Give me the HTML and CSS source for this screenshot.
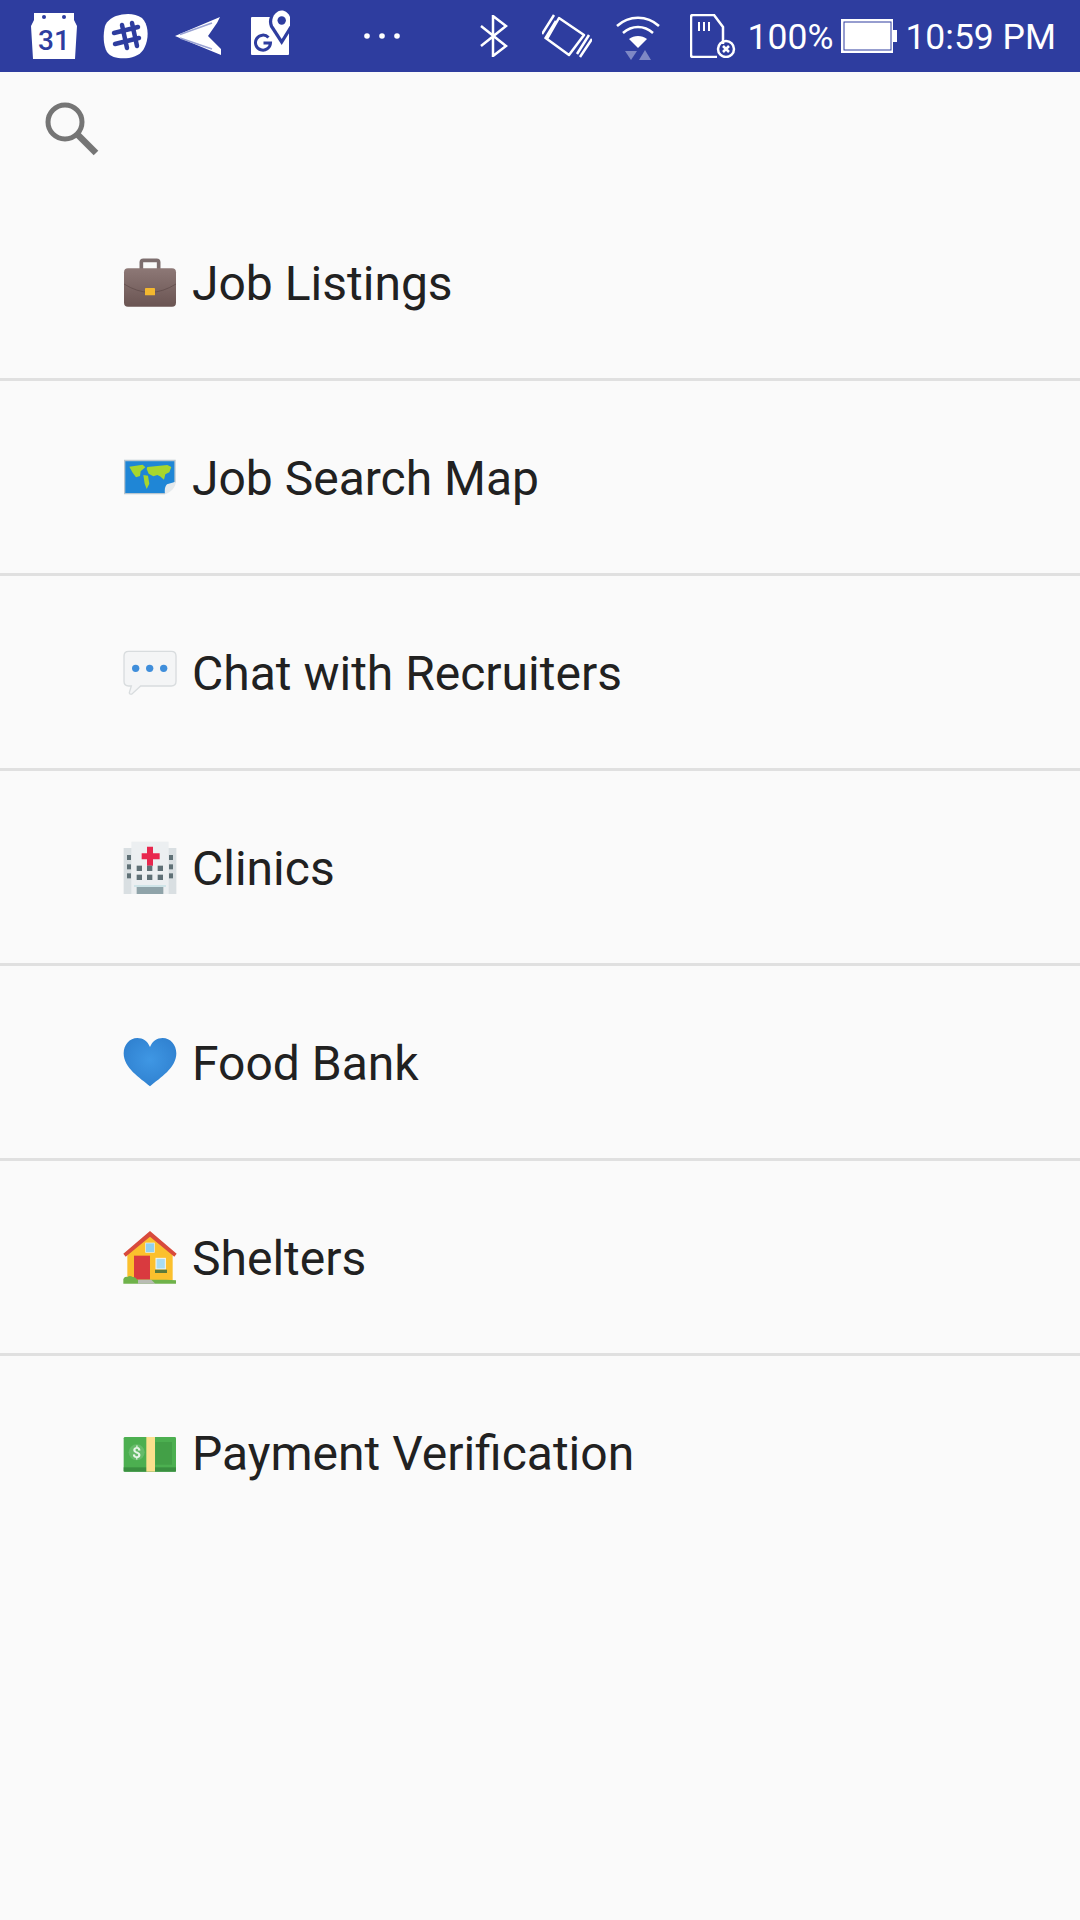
FILE: index.html
```html
<!DOCTYPE html>
<html lang="en">
<head>
<meta charset="utf-8">
<title>Job menu</title>
<link rel="stylesheet" href="styles.css">
</head>
<body>
<div class="status">
  <div class="status-group">
    <svg class="ic cal" viewBox="0 0 46 48"><path d="M3 1h40l0 7 3 6-2 33H2L0 14l3-6z" fill="#fff"/><circle cx="13" cy="5" r="2" fill="#2e3d9f"/><circle cx="33" cy="5" r="2" fill="#2e3d9f"/><text class="cal-num" x="23" y="38" text-anchor="middle">31</text></svg>
    <svg class="ic slk" viewBox="0 0 46 46"><path d="M13 3C22 0 32 0 39 5c6 6 7 17 4 26-3 9-8 12-17 14-9 1-18 0-22-6C0 32 0 21 2 13 4 8 8 5 13 3z" fill="#fff"/><path d="M19 12l5 23M29 10l5 23M11 20l24-6M12 31l24-6" stroke="#2e3d9f" stroke-width="4.500" stroke-linecap="round" fill="none"/></svg>
    <svg class="ic pln" viewBox="0 0 48 40"><path d="M1 20L46 1l-3 6-9 13 13 13v6z" fill="#fff"/><path d="M6 18.500L38 7M6 22L38 33" stroke="#9aa3d4" stroke-width="1.500"/></svg>
    <svg class="ic map" viewBox="0 0 40 46"><rect x="1" y="7" width="38" height="38" rx="1" fill="#fff"/><path d="M31.700 35L20 17C16 7 24-1 31.700-1S47 7 43 17z" fill="#2e3d9f"/><path d="M31.700 29L23 15.500C20 8 26 0.500 31.700 0.500S43 8 40 15.500z" fill="#fff"/><circle cx="31.700" cy="10.500" r="4.200" fill="#2e3d9f"/><path d="M18.500 27.500a7.500 7.500 0 1 0 2 5.500h-7" fill="none" stroke="#2e3d9f" stroke-width="3"/></svg>
    <svg class="ic dts" viewBox="0 0 36 6"><circle cx="3" cy="3" r="2.800" fill="#fff"/><circle cx="18" cy="3" r="2.800" fill="#fff"/><circle cx="33" cy="3" r="2.800" fill="#fff"/></svg>
  </div>
  <div class="status-group">
    <svg class="ic blt" viewBox="0 0 28 42"><path d="M1 11l25 20-13 10V1l13 10L1 31" fill="none" stroke="#fff" stroke-width="2.500"/></svg>
    <svg class="ic vib" viewBox="0 0 50 44"><g fill="none" stroke="#fff" stroke-width="2.500" stroke-linejoin="round"><path d="M17 4L42 21 27 41 5 25z"/><path d="M0 20L12 1M3 25L14 7M35 40L47 21M38 43L50 25"/></g></svg>
    <svg class="ic wif" viewBox="0 0 44 44"><g fill="none" stroke="#fff" stroke-width="2.500"><path d="M1 10c12-11 30-11 42 0M7 17c9-8 21-8 30 0"/></g><path d="M13 23c5-4 13-4 18 0l-9 9z" fill="#fff"/><path d="M9 35h12l-6 9z" fill="#7e88c5"/><path d="M29 34l6 10H23z" fill="#7e88c5"/></svg>
    <svg class="ic sdc" viewBox="0 0 46 44"><path d="M33 30V13L24 1H3q-2 0-2 2v38q0 2 2 2h24" fill="none" stroke="#fff" stroke-width="2.500" stroke-linejoin="round"/><path d="M9 8v9M14 8v9M19 8v9" stroke="#fff" stroke-width="2"/><circle cx="36" cy="35" r="8" fill="none" stroke="#fff" stroke-width="2.500"/><path d="M33 32l6 6M39 32l-6 6" stroke="#fff" stroke-width="2.500"/></svg>
    <span class="stat-text pct">100%</span>
    <svg class="ic bat" viewBox="0 0 56 34"><path d="M1 1h50v32H1z" fill="#fff" stroke="#fff" stroke-width="2"/><rect x="3" y="3" width="47" height="28" fill="none" stroke="#2e3d9f" stroke-width="1"/><rect x="52" y="11" width="4" height="12" fill="#fff"/></svg>
    <span class="stat-text tim">10:59 PM</span>
  </div>
</div>

<header class="search-bar">
  <svg class="search-ic" viewBox="0 0 56 56"><circle cx="22" cy="20" r="17" fill="none" stroke="#757575" stroke-width="5"/><path d="M34 32l19 19" stroke="#757575" stroke-width="6.500"/></svg>
</header>

<ul class="menu">
  <li class="row">
    <svg class="emoji" viewBox="39 48 162 162">
      <defs><linearGradient id="brief" x1="0" y1="0" x2="0" y2="1"><stop offset="0" stop-color="#8d7876"/><stop offset="1" stop-color="#6a5452"/></linearGradient></defs>
      <path d="M94 93V70q0-6 6-6h40q6 0 6 6v23" fill="none" stroke="#7d6e6e" stroke-width="11"/>
      <rect x="42" y="88" width="156" height="115" rx="12" fill="url(#brief)"/>
      <path d="M42 135q40 25 78 25t78-25" fill="none" stroke="#5a4745" stroke-width="2"/>
      <rect x="105" y="147" width="30" height="22" rx="2" fill="#f3b82f"/>
    </svg>
    <span class="label">Job Listings</span>
  </li>
  <li class="row">
    <svg class="emoji" viewBox="39 33 162 162">
      <path d="M42 62h155v68l-32 36H42z" fill="#b9c6cf"/>
      <path d="M46 67h147v62l-28 33H46z" fill="#1f86d6"/>
      <path d="M58 83l40-6 8 8-14 12-2 14-12 4-10-14zM100 108l14 2 4 24-8 16-6-16zM112 84l60-6 12 6-6 16-12 6-4 16-12-10-8-4-12 4-14-8-6-14z" fill="#a7d62d"/>
      <path d="M165 166q-3-22 6-30l26-8c2 14-14 32-32 38z" fill="#e4e9ec"/>
    </svg>
    <span class="label">Job Search Map</span>
  </li>
  <li class="row">
    <svg class="emoji" viewBox="39 33 162 162">
      <path d="M56 52h128q14 0 14 14v76q0 14-14 14H92l-26 24q-8 2-8-4l6-20h-8q-14 0-14-14V66q0-14 14-14z" fill="#f4f5f6" stroke="#d8dcde" stroke-width="4"/>
      <circle cx="77" cy="103" r="11" fill="#3f8edb"/><circle cx="119" cy="103" r="11" fill="#3f8edb"/><circle cx="161" cy="103" r="11" fill="#3f8edb"/>
    </svg>
    <span class="label">Chat with Recruiters</span>
  </li>
  <li class="row">
    <svg class="emoji" viewBox="39 33 162 162">
      <rect x="41" y="57" width="158" height="140" fill="#d9dfe2"/>
      <rect x="64" y="38" width="112" height="159" fill="#eceff1"/>
      <path d="M111 53h18v20h20v18h-20v19h-18V91H95V73h16z" fill="#e8274e"/>
      <g fill="#5f7076"><rect x="51" y="78" width="12" height="15"/><rect x="51" y="106" width="12" height="15"/><rect x="51" y="133" width="12" height="15"/><rect x="177" y="78" width="12" height="15"/><rect x="177" y="106" width="12" height="15"/><rect x="177" y="133" width="12" height="15"/><rect x="80" y="110" width="16" height="16"/><rect x="111" y="110" width="16" height="16"/><rect x="143" y="110" width="16" height="16"/><rect x="80" y="137" width="16" height="16"/><rect x="111" y="137" width="16" height="16"/><rect x="143" y="137" width="16" height="16"/></g>
      <rect x="72" y="168" width="96" height="6" fill="#cfe4e8"/>
      <rect x="80" y="174" width="80" height="23" fill="#8fa3a9"/>
    </svg>
    <span class="label">Clinics</span>
  </li>
  <li class="row">
    <svg class="emoji" viewBox="39 33 162 162">
      <defs><radialGradient id="hrt" cx="0.5" cy="0.45" r="0.6"><stop offset="0" stop-color="#3f97e4"/><stop offset="1" stop-color="#2f80cf"/></radialGradient></defs>
      <path d="M120 187C90 162 41 132 41 88c0-26 18-46 41-46 17 0 31 9 38 27 7-18 21-27 38-27 23 0 41 20 41 46 0 44-49 74-79 99z" fill="url(#hrt)"/>
    </svg>
    <span class="label">Food Bank</span>
  </li>
  <li class="row">
    <svg class="emoji" viewBox="39 33 162 162">
      <path d="M52 106L120 46l68 60v78H52z" fill="#fbc02d"/>
      <path d="M40 104L120 36l80 68-7 9-73-60-73 60z" fill="#d84a3c"/>
      <rect x="107" y="72" width="26" height="28" fill="#8fd0ee" stroke="#e9f4f8" stroke-width="2"/>
      <rect x="72" y="110" width="48" height="72" fill="#d93a3f"/>
      <rect x="138" y="118" width="28" height="32" fill="#a8dcf2" stroke="#f4f8fa" stroke-width="3"/>
      <rect x="135" y="152" width="36" height="10" fill="#5d7a3a"/>
      <path d="M40 194v-14q4-8 12-6 8-6 16 0 8-2 14 8h86l30 2v10z" fill="#6fb24a"/>
      <path d="M84 182h40l12 12H84z" fill="#b9bcb4"/>
    </svg>
    <span class="label">Shelters</span>
  </li>
  <li class="row">
    <svg class="emoji" viewBox="39 33 162 162">
      <rect x="41" y="69" width="157" height="104" rx="4" fill="#4caf50"/>
      <rect x="41" y="160" width="157" height="13" fill="#3a8f40"/>
      <circle cx="80" cy="115" r="24" fill="#66bb6a"/>
      <rect x="109" y="69" width="26" height="104" fill="#fce08e"/>
      <path d="M136 84h50v68h-50z" fill="#43a047"/>
      <text class="money" x="80" y="132" text-anchor="middle">$</text>
    </svg>
    <span class="label">Payment Verification</span>
  </li>
</ul>
</body>
</html>
```

FILE: styles.css
```css
* { box-sizing: border-box; }
html, body { margin: 0; padding: 0; }
body {
  width: 1080px;
  height: 1920px;
  background: #fafafa;
  font-family: Roboto, "Noto Sans", sans-serif;
  overflow: hidden;
}
.status {
  height: 72px;
  background: #2e3d9f;
  display: flex;
  justify-content: space-between;
  align-items: center;
  padding: 0 24px 0 31px;
  color: #fff;
}
.status-group { display: flex; align-items: center; }
.ic { display: block; flex: none; }
.cal { width: 46px; height: 48px; }
.slk { width: 46px; height: 46px; margin-left: 26px; }
.pln { width: 48px; height: 40px; margin-left: 25px; }
.map { width: 40px; height: 46px; margin-left: 28px; margin-top: -7px; }
.dts { width: 36px; height: 6px; margin-left: 74px; }
.blt { width: 28px; height: 42px; }
.vib { width: 50px; height: 44px; margin-left: 34px; }
.wif { width: 44px; height: 44px; margin-left: 24px; margin-top: 4px; }
.sdc { width: 46px; height: 44px; margin-left: 30px; }
.bat { width: 56px; height: 34px; margin-left: 8px; }
.stat-text { font-size: 35.5px; line-height: 72px; padding-top: 2px; white-space: nowrap; }
.pct { margin-left: 12px; }
.tim { margin-left: 8px; }
.cal-num { font: 500 28px Roboto, sans-serif; fill: #2e3d9f; }
.money { font: 700 46px Roboto, sans-serif; fill: #e8f5e9; }
.search-bar { height: 114px; padding: 30px 0 0 43px; }
.search-ic { display: block; width: 56px; height: 56px; }
.menu { list-style: none; margin: 0; padding: 0; }
.row {
  height: 195px;
  border-bottom: 3px solid #e0e0e0;
  display: flex;
  align-items: center;
  padding-left: 123px;
}
.row:last-child { border-bottom-color: transparent; }
.emoji { display: block; flex: none; width: 54px; height: 54px; filter: blur(0.4px); }
.label {
  margin-left: 15px;
  padding-top: 3px;
  font-size: 48px;
  line-height: 60px;
  color: #212121;
  white-space: nowrap;
}
```
